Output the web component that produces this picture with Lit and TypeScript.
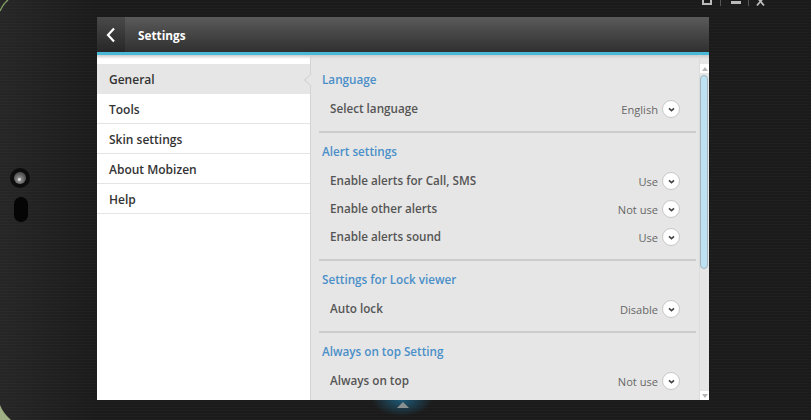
import { LitElement, html, css, svg } from 'lit';
import { customElement } from 'lit/decorators.js';

const MENU = ['General', 'Tools', 'Skin settings', 'About Mobizen', 'Help'];

const GROUPS = [
  { title: 'Language', rows: [['Select language', 'English']] },
  {
    title: 'Alert settings',
    rows: [
      ['Enable alerts for Call, SMS', 'Use'],
      ['Enable other alerts', 'Not use'],
      ['Enable alerts sound', 'Use'],
    ],
  },
  { title: 'Settings for Lock viewer', rows: [['Auto lock', 'Disable']] },
  { title: 'Always on top Setting', rows: [['Always on top', 'Not use']] },
];

const chevron = svg`<path d="M1 1.4 L3.5 3.6 L6 1.4" fill="none" stroke="#444" stroke-width="1.7"/>`;

@customElement('app-root')
export class AppRoot extends LitElement {
  static styles = css`
    :host {
      display: block;
      width: 811px;
      height: 420px;
      font-family: 'Open Sans', 'Liberation Sans', sans-serif;
    }
    .device {
      position: relative;
      width: 811px;
      height: 420px;
      overflow: hidden;
      box-sizing: border-box;
      padding: 17px 102px 20px 97px;
      background:
        linear-gradient(90deg, rgba(255, 255, 255, 0.05), transparent 97px),
        repeating-linear-gradient(#1b1b1b 0 2px, #1f1f1f 2px 3px);
    }
    .controls {
      position: absolute;
      top: 0;
      left: 700px;
      overflow: visible;
    }
    .edge {
      position: absolute;
      top: 0;
      left: 0;
    }
    .cam {
      position: absolute;
      left: 10px;
      top: 168px;
      width: 20px;
      height: 20px;
      border-radius: 50%;
      background: #0c0c0c;
    }
    .cam::after {
      content: '';
      position: absolute;
      left: 4px;
      top: 4px;
      width: 12px;
      height: 12px;
      border-radius: 50%;
      background: radial-gradient(circle at 45% 62%, #ddd 0 1px, #888 2px, #555 6px);
    }
    .slot {
      position: absolute;
      left: 14px;
      top: 197px;
      width: 14px;
      height: 25px;
      border-radius: 7px;
      background: #050505;
    }
    .glow {
      position: absolute;
      left: 372px;
      top: 400px;
      width: 60px;
      height: 16px;
      background: radial-gradient(ellipse 30px 16px at 50% 0, #1d5a78, transparent);
    }
    .arrow {
      position: absolute;
      left: 397px;
      top: 402px;
      width: 0;
      height: 0;
      border-left: 6px solid transparent;
      border-right: 6px solid transparent;
      border-bottom: 6px solid #8a8f92;
    }
    .window {
      display: flex;
      flex-direction: column;
      height: 100%;
    }
    .head {
      display: flex;
      align-items: center;
      height: 35px;
      flex: none;
      border-bottom: 3px solid #4ab9d8;
      background: linear-gradient(#5a5a5a, #303030);
    }
    .back {
      display: flex;
      align-items: center;
      justify-content: center;
      width: 28px;
      height: 100%;
      background: rgba(0, 0, 0, 0.18);
    }
    .head h1 {
      margin: 0 0 0 13px;
      font-size: 11.8px;
      font-weight: 700;
      color: #fff;
    }
    .body {
      flex: 1;
      display: flex;
      min-height: 0;
    }
    .menu {
      width: 214px;
      flex: none;
      box-sizing: border-box;
      padding-top: 9px;
      background: linear-gradient(#ccc, #fff 4px);
      border-right: 1px solid #d4d4d4;
    }
    .menu div {
      box-sizing: border-box;
      height: 30px;
      line-height: 29px;
      padding: 1px 0 0 12px;
      border-bottom: 1px solid #e4e4e4;
      font-size: 12px;
      font-weight: 600;
      color: #333;
    }
    .menu div.on {
      background: #e6e6e6;
      border-bottom-color: #e6e6e6;
    }
    .panel {
      position: relative;
      flex: 1;
      display: flex;
      min-width: 0;
      background: linear-gradient(#ccc, #e6e6e6 4px);
    }
    .notch {
      position: absolute;
      left: -5px;
      top: 20px;
      width: 10px;
      height: 10px;
      transform: rotate(45deg);
      background: #e6e6e6;
      border-left: 1px solid #d4d4d4;
      border-bottom: 1px solid #d4d4d4;
      box-sizing: border-box;
    }
    .list {
      flex: 1;
      min-width: 0;
      overflow: hidden;
      padding: 16px 3px 0 8px;
    }
    .group {
      border-bottom: 2px solid #ccc;
      padding-bottom: 8px;
      margin-bottom: 10px;
    }
    .group h2 {
      margin: 0 0 6px 3px;
      height: 18px;
      line-height: 16px;
      font-size: 11.7px;
      font-weight: 600;
      color: #4a8fc8;
    }
    .row {
      display: flex;
      align-items: center;
      height: 28px;
      padding: 0 16px 0 11px;
      font-size: 11.7px;
      font-weight: 600;
      color: #555;
    }
    .row .label {
      flex: 1;
      margin-bottom: 2px;
    }
    .row .value {
      font-size: 11.1px;
      font-weight: 400;
      color: #666;
      margin-right: 4px;
    }
    .drop {
      box-sizing: border-box;
      width: 18px;
      height: 18px;
      border-radius: 50%;
      background: #fff;
      border: 1px solid #c8c8c8;
      display: flex;
      align-items: center;
      justify-content: center;
    }
    .scroll {
      width: 9px;
      flex: none;
      display: flex;
      flex-direction: column;
      padding-top: 9px;
      border-left: 1px solid #dcdcdc;
    }
    .btn {
      height: 9px;
      background: #fff;
      display: flex;
      align-items: center;
      justify-content: center;
      flex: none;
    }
    .up {
      border-left: 3px solid transparent;
      border-right: 3px solid transparent;
      border-bottom: 4px solid #b4b4b4;
    }
    .down {
      border-left: 3px solid transparent;
      border-right: 3px solid transparent;
      border-top: 4px solid #b4b4b4;
    }
    .track {
      flex: 1;
      padding-top: 2px;
    }
    .thumb {
      height: 194px;
      margin-right: 1px;
      box-sizing: border-box;
      background: #bfe2f3;
      border: 1px solid #9fb4c0;
      border-radius: 4px;
    }
  `;

  render() {
    return html`
      <div class="device">
        <svg class="edge" width="811" height="420" viewBox="0 0 811 420">
          <path d="M8 0 Q3 4 0 11" fill="none" stroke="#7f9a62" stroke-width="1.5"/>
          <path d="M0 405 Q3 413 11 420 L0 420 Z" fill="#9fb184"/>
        </svg>
        <svg class="controls" width="70" height="8" viewBox="0 0 70 8">
          <rect x="3" y="-5" width="8" height="9" fill="none" stroke="#bbb" stroke-width="2"/>
          <rect x="31" y="1" width="10" height="3" fill="#bbb"/>
          <path d="M20.5 0 V6 M48.5 0 V6" stroke="#555" stroke-width="1"/>
          <path d="M57 5.5 L62.5 -1 M64 5.5 L58.5 -1" stroke="#bbb" stroke-width="1.8"/>
        </svg>
        <div class="cam"></div>
        <div class="slot"></div>
        <div class="glow"></div>
        <div class="arrow"></div>
        <div class="window">
          <div class="head">
            <div class="back">
              <svg width="10" height="16" viewBox="0 0 10 16">
                <path d="M8 1.5 L2 8 L8 14.5" fill="none" stroke="#fff" stroke-width="2.2"/>
              </svg>
            </div>
            <h1>Settings</h1>
          </div>
          <div class="body">
            <div class="menu">
              ${MENU.map((m, i) => html`<div class=${i === 0 ? 'on' : ''}>${m}</div>`)}
            </div>
            <div class="panel">
              <div class="notch"></div>
              <div class="list">
                ${GROUPS.map(
                  (g) => html`
                    <div class="group">
                      <h2>${g.title}</h2>
                      ${g.rows.map(
                        (r) => html`
                          <div class="row">
                            <span class="label">${r[0]}</span>
                            <span class="value">${r[1]}</span>
                            <span class="drop">
                              <svg width="7" height="5" viewBox="0 0 7 5">${chevron}</svg>
                            </span>
                          </div>
                        `,
                      )}
                    </div>
                  `,
                )}
              </div>
              <div class="scroll">
                <div class="btn"><div class="up"></div></div>
                <div class="track"><div class="thumb"></div></div>
                <div class="btn"><div class="down"></div></div>
              </div>
            </div>
          </div>
        </div>
      </div>
    `;
  }
}
